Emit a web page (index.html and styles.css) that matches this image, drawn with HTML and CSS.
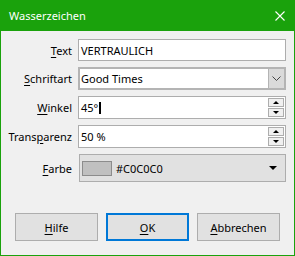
FILE: index.html
```html
<!DOCTYPE html>
<html lang="de">
<head>
    <meta charset="UTF-8">
    <title>Wasserzeichen</title>
    <link rel="stylesheet" href="styles.css">
</head>
<body>
    <div class="window">
        <!-- Title bar -->
        <div class="titlebar">
            <span class="title">Wasserzeichen</span>
            <svg class="close" width="10" height="10" viewBox="0 0 10 10">
                <path d="M0.5 0.5 L9.5 9.5 M9.5 0.5 L0.5 9.5" stroke="#fff" stroke-width="1.1" fill="none"/>
            </svg>
        </div>

        <!-- Form -->
        <div class="form">
            <div class="label"><u>T</u>ext</div>
            <div class="field text-field">VERTRAULICH</div>

            <div class="label"><u>S</u>chriftart</div>
            <div class="field select-field">
                <span class="value">Good Times</span>
                <span class="drop-btn">
                    <svg width="9" height="5" viewBox="0 0 9 5">
                        <path d="M0.5 0.5 L4.5 4.5 L8.5 0.5" stroke="#444" stroke-width="1" fill="none"/>
                    </svg>
                </span>
            </div>

            <div class="label"><u>W</u>inkel</div>
            <div class="field spin-field">
                <span class="value">45°<span class="caret"></span></span>
                <span class="spin">
                    <span class="spin-btn"><span class="tri-up"></span></span>
                    <span class="spin-btn"><span class="tri-down"></span></span>
                </span>
            </div>

            <div class="label">Trans<u>p</u>arenz</div>
            <div class="field spin-field">
                <span class="value">50 %</span>
                <span class="spin">
                    <span class="spin-btn"><span class="tri-up"></span></span>
                    <span class="spin-btn"><span class="tri-down"></span></span>
                </span>
            </div>

            <div class="label"><u>F</u>arbe</div>
            <div class="field color-field">
                <span class="swatch"></span>
                <span class="color-name">#C0C0C0</span>
                <span class="color-arrow"></span>
            </div>
        </div>

        <!-- Buttons -->
        <div class="buttons">
            <div class="btn"><u>H</u>ilfe</div>
            <div class="btn btn-default"><u>O</u>K</div>
            <div class="btn"><u>A</u>bbrechen</div>
        </div>
    </div>
</body>
</html>
```

FILE: styles.css
```css
/* Reset */
* {
    margin: 0;
    padding: 0;
    box-sizing: border-box;
}

body {
    font-family: 'Noto Sans', sans-serif;
    font-size: 11px;
    color: #000;
    background-color: #f0f0f0;
}

u {
    text-underline-offset: 2px;
}

/* Window */
.window {
    width: 295px;
    height: 256px;
    border: 1px solid #1aa20c;
    border-top: none;
    background-color: #f0f0f0;
    display: flex;
    flex-direction: column;
}

.titlebar {
    height: 31px;
    background-color: #1aa20c;
    color: white;
    display: flex;
    align-items: center;
    justify-content: space-between;
    padding: 0 9px 0 8px;
    font-size: 11px;
}

.close {
    display: block;
}

/* Form grid */
.form {
    display: grid;
    grid-template-columns: 71px 1fr;
    grid-template-rows: 22px 23px 23px 23px 28px;
    column-gap: 6px;
    row-gap: 6px;
    padding: 8px 8px 0 0;
}

.label {
    align-self: center;
    text-align: right;
}

.field {
    display: flex;
    align-items: center;
    border: 1px solid #adadad;
    background-color: white;
    padding-left: 2px;
}

.select-field {
    border: 2px solid #b4b4b4;
    padding-left: 1px;
}

.select-field .value {
    flex: 1;
}

.drop-btn {
    width: 16px;
    height: 100%;
    background-color: #dadada;
    border-left: 1px solid #b4b4b4;
    display: flex;
    align-items: center;
    justify-content: center;
}

/* Spin boxes */
.spin-field .value {
    flex: 1;
    display: flex;
    align-items: center;
}

.caret {
    display: inline-block;
    width: 2px;
    height: 12px;
    background-color: #000;
    margin-left: 1px;
}

.spin {
    display: flex;
    flex-direction: column;
    gap: 1px;
    margin-right: 1px;
}

.spin-btn {
    width: 16px;
    height: 9px;
    border: 1px solid #adadad;
    background-color: #f0f0f0;
    display: flex;
    align-items: center;
    justify-content: center;
}

.tri-up {
    border-left: 3px solid transparent;
    border-right: 3px solid transparent;
    border-bottom: 3px solid #000;
}

.tri-down {
    border-left: 3px solid transparent;
    border-right: 3px solid transparent;
    border-top: 3px solid #000;
}

/* Colour picker */
.color-field {
    background-color: #e1e1e1;
    margin-left: 1px;
    padding-left: 2px;
}

.swatch {
    width: 30px;
    height: 15px;
    background-color: #c0c0c0;
    border: 1px solid #8c8c8c;
}

.color-name {
    margin-left: 4px;
}

.color-arrow {
    margin-left: auto;
    margin-right: 8px;
    border-left: 4px solid transparent;
    border-right: 4px solid transparent;
    border-top: 4px solid #000;
}

/* Buttons */
.buttons {
    display: flex;
    gap: 8px;
    margin-top: 31px;
    padding-left: 14px;
}

.btn {
    width: 83px;
    height: 28px;
    border: 1px solid #adadad;
    background-color: #e1e1e1;
    display: flex;
    align-items: center;
    justify-content: center;
}

.btn-default {
    border: 2px solid #0078d7;
}
```
